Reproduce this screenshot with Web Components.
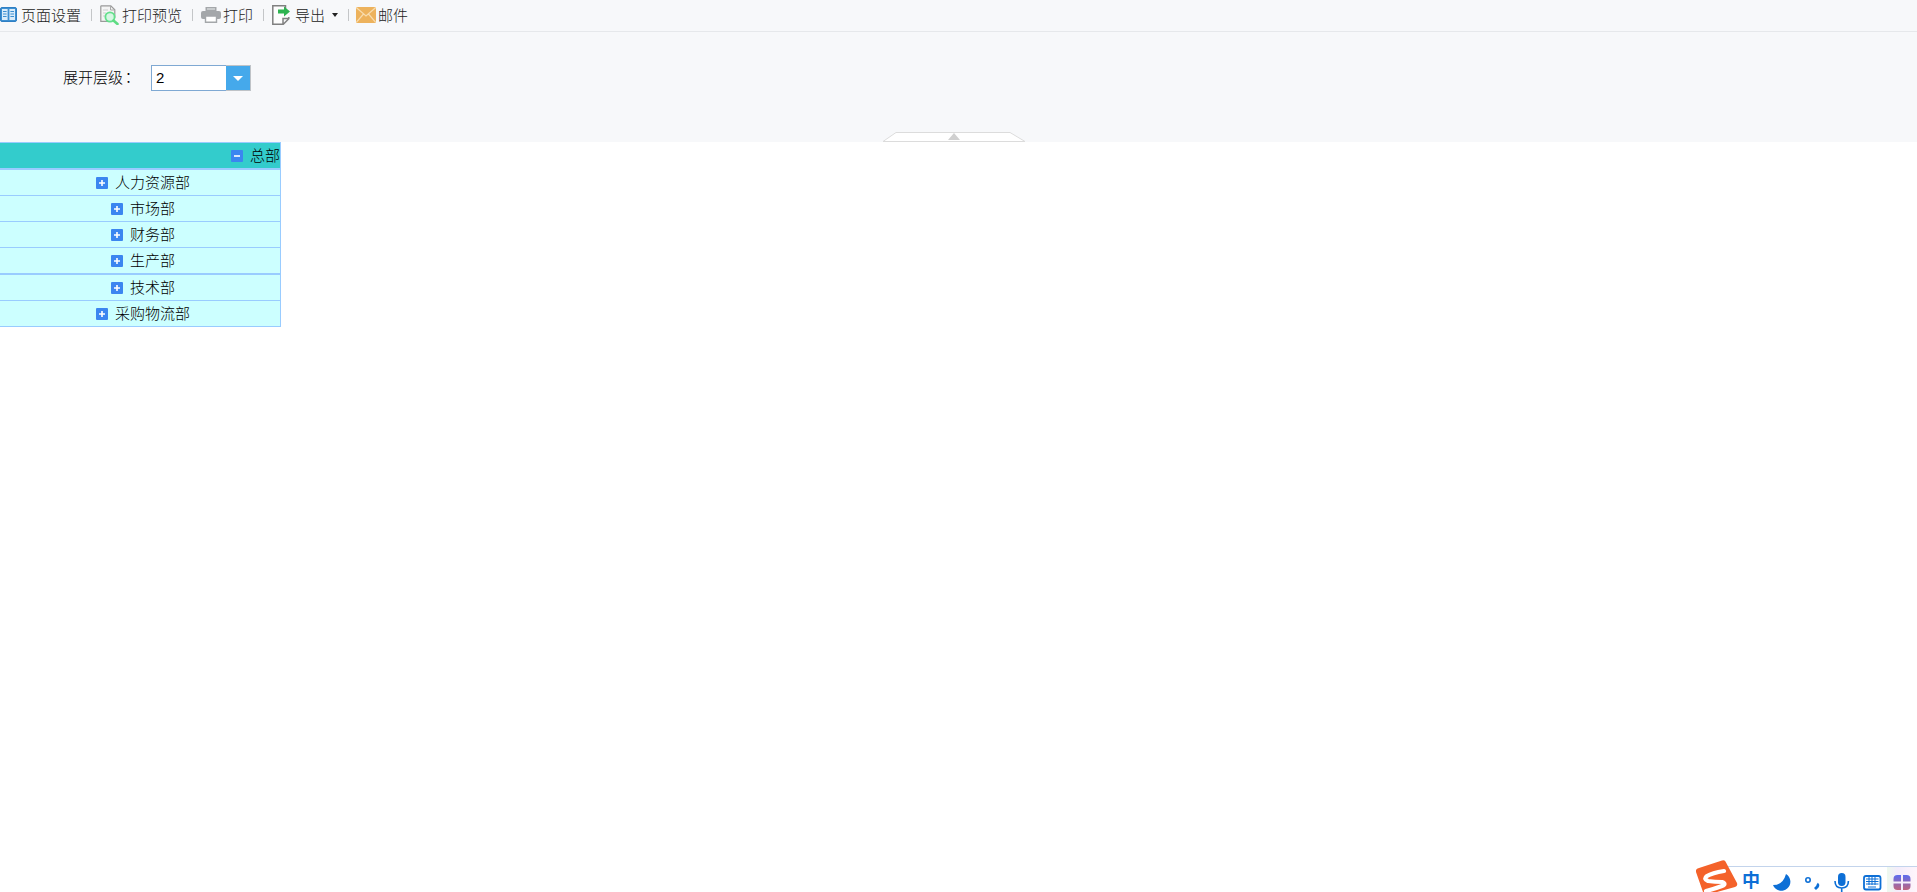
<!DOCTYPE html>
<html lang="zh"><head><meta charset="utf-8">
<style>
html,body{margin:0;height:100%;background:#fff;overflow:hidden}
body{font-family:"Noto Sans CJK SC","Liberation Sans",sans-serif;position:relative}
</style></head><body>
<report-toolbar>
  <tool-button label="页面设置" sep gap="4"><svg slot="icon" width="17" height="15" viewBox="0 0 17 15"><rect x=".5" y=".5" width="16" height="14" rx="1.5" fill="#3d8fd1" stroke="#2f7fc4"/><rect x="2" y="2" width="5.6" height="11" fill="#d9ecfa"/><rect x="9.4" y="2" width="5.6" height="11" fill="#d9ecfa"/><path d="M3 4.5h3.6M3 7h3.6M3 9.5h3.6M10.4 4.5H14M10.4 7H14M10.4 9.5H14" stroke="#3d8fd1"/></svg></tool-button>
  <tool-button label="打印预览" sep gap="2"><svg slot="icon" width="20" height="20" viewBox="0 0 20 20"><path d="M.8.8h10l4 4v8M.8.8v15.500h9" fill="#f4f4f4" stroke="#9a9a9a" stroke-width="1.2"/><path d="M10.500 1v4h4" fill="none" stroke="#aaa"/><path d="M3 5h5M3 8h3M3 11h2" stroke="#ccc"/><circle cx="10" cy="12" r="4.600" fill="#d6f7e4" stroke="#63e08c" stroke-width="1.800"/><path d="M13.500 15.500l4 3.500" stroke="#5fdc84" stroke-width="2.600" stroke-linecap="round"/></svg></tool-button>
  <tool-button label="打印" sep gap="2"><svg slot="icon" width="20" height="16" viewBox="0 0 20 16"><path d="M4.500 0h11v4h-11z" fill="#a4a7aa"/><rect y="4" width="20" height="8" rx="2" fill="#a4a7aa"/><path d="M4.500 9h11v6.300h-11z" fill="#fff" stroke="#a4a7aa" stroke-width="1.400"/><path d="M6 2h8" stroke="#d5d7d9" stroke-width="1.500"/></svg></tool-button>
  <tool-button label="导出" sep="7" gap="5" caret><svg slot="icon" width="18" height="20" viewBox="0 0 18 20"><path d="M13.500 7V.8H.8v18.400h10.500l5.500-5.500V12M11 19v-5.500h5.500" fill="#fdfdfd" stroke="#808080" stroke-width="1.500"/><path d="M6 4.500h6V1.500L18 6.500l-6 5V8.500H6z" fill="#2eb350"/></svg></tool-button>
  <tool-button label="邮件" gap="2"><svg slot="icon" width="20" height="16" viewBox="0 0 20 16"><rect width="20" height="16" rx="1.500" fill="#edb25c"/><path d="M.5.800L10 9 19.500.8M.5 15.200L7.500 7M19.500 15.200L12.500 7" fill="none" stroke="#f8dcae" stroke-width="1.200"/></svg></tool-button>
</report-toolbar>
<param-panel label="展开层级" value="2"></param-panel>
<tree-table>
  <tree-row head>总部</tree-row>
  <tree-row>人力资源部</tree-row>
  <tree-row>市场部</tree-row>
  <tree-row>财务部</tree-row>
  <tree-row thick>生产部</tree-row>
  <tree-row>技术部</tree-row>
  <tree-row>采购物流部</tree-row>
</tree-table>
<ime-bar></ime-bar>
<script>
function def(name, css, html){
  customElements.define(name, class extends HTMLElement{
    constructor(){super();this.attachShadow({mode:'open'})}
    connectedCallback(){this.shadowRoot.innerHTML='<style>'+css+'</style>'+(typeof html==='function'?html(this):html)}
  });
}
def('report-toolbar',
 ':host{display:flex;align-items:center;height:31px;background:#f7f8fa;border-bottom:1px solid #e6e8eb}',
 '<slot></slot>');
def('tool-button',
 ':host{display:flex;align-items:center;height:29px;padding-bottom:2px;font-size:15px;font-weight:300;color:#222;white-space:nowrap}'+
 '.i{display:flex;align-items:center}.l{line-height:29px}'+
 '.c{width:0;height:0;border:3.5px solid transparent;border-top:4px solid #222;border-bottom:0;margin-left:7px}'+
 '.s{width:1px;height:12px;background:#c4c6c8}',
 e=>{const sep=e.hasAttribute('sep');const caret=e.hasAttribute('caret');
  return '<span class="i"><slot name="icon"></slot></span><span class="l" style="margin-left:'+e.getAttribute('gap')+'px">'+e.getAttribute('label')+'</span>'+
  (caret?'<span class="c"></span>':'')+
  (sep?'<span class="s" style="margin:0 '+(e.getAttribute('sep')||8)+'px 0 10px"></span>':'');});
def('param-panel',
 ':host{display:block;position:relative;height:110px;background:#f7f8fa;font-size:15px;font-weight:300;color:#000}'+
 '.r{display:flex;align-items:center;padding:33px 0 0 63px}'+
 '.l{width:88px;line-height:24px;padding-bottom:2px;display:flex}'+
 '.l b{font:300 15px/24px "Noto Sans CJK TC",sans-serif;margin-left:-2px}'+
 '.b{display:flex;width:100px;height:26px;box-sizing:border-box}'+
 '.v{flex:1;border:1px solid #7fa9d3;background:#fff;border-right:0;font:15px/24px "Liberation Sans",sans-serif;padding-left:4px;color:#000}'+
 '.a{width:24px;background:#45a9eb;border:1px solid #bfc3c7;border-left:0;display:flex;align-items:center;justify-content:center}'+
 '.a i{width:0;height:0;border:5.500px solid transparent;border-top:5.500px solid #fff;border-bottom:0;margin-top:1px}'+
 '.h{position:absolute;left:882px;top:100px;width:144px;height:10px}',
 e=>'<div class="r"><span class="l">'+e.getAttribute('label')+'<b>：</b></span><div class="b"><span class="v">'+e.getAttribute('value')+'</span><span class="a"><i></i></span></div></div>'+
 '<svg class="h" viewBox="0 0 144 10"><path d="M1 9.500L14 .5H128L143 9.500z" fill="#fff" stroke="#dcdcdc" stroke-width="1"/><path d="M72 1l6 7h-12z" fill="#d0d0d0"/></svg>');
def('tree-table',
 ':host{display:block;width:281px;border-top:1px solid #99ccff;border-right:1px solid #99ccff;box-sizing:border-box}',
 '<slot></slot>');
def('tree-row',
 ':host{display:flex;align-items:center;justify-content:center;height:25px;padding-left:6px;box-sizing:content-box;background:#ccffff;border-bottom:1px solid #99ccff;font-size:15px;font-weight:300;color:#000}'+
 ':host([head]){background:#33cccc;justify-content:flex-end;border-bottom-width:2px;padding-left:0}'+
 ':host([thick]){border-bottom-width:2px}'+
 'svg{margin-right:7px;flex:none}span{line-height:23px;padding-bottom:2px}',
 e=>{const h=e.hasAttribute('head');
  return '<svg width="12" height="12" viewBox="0 0 12 12"><rect width="12" height="12" rx="1" fill="#3b86f0"/><path d="M3 6h6'+(h?'':'M6 3v6')+'" stroke="#fff" stroke-width="1.600"/></svg><span><slot></slot></span>';});
def('ime-bar',
 ':host{position:absolute;left:1696px;bottom:0;width:221px;height:32px;display:block}'+
 '.bar{position:absolute;left:30px;right:0;top:6px;bottom:0;background:#fff;border-top:1px solid #c3d4ec}'+
 'svg{position:absolute;left:0;top:0;overflow:hidden}'+
 '.z{position:absolute;left:46px;top:7px;font:bold 18px/24px "Noto Sans CJK SC",sans-serif;color:#0d6fd6}',
 '<div class="bar"></div>'+
 '<svg width="221" height="32" viewBox="1696 860 221 32">'+
 '<defs><linearGradient id="cl" x1="0" y1="0" x2="0" y2="1"><stop offset="0" stop-color="#5b6cf0"/><stop offset="1" stop-color="#c0647e"/></linearGradient>'+
 '<linearGradient id="bg" x1="0" y1="0" x2="1" y2="0"><stop offset="0" stop-color="#eef9ee"/><stop offset=".35" stop-color="#f3ecfb"/><stop offset="1" stop-color="#fff5fb"/></linearGradient></defs>'+
 '<path d="M1699 868L1722 860.500q3-1 4 2L1737 883q1 3-2 4L1717 892H1703L1696 872q-1-3 3-4z" fill="#f4622a"/>'+
 '<path d="M1724 871Q1712 873 1707 876Q1703 879 1708 881Q1715 882 1722 882Q1727 884 1722 886Q1714 889 1706 891" fill="none" stroke="#fff" stroke-width="4.200" stroke-linecap="round"/>'+
 '<path d="M1786 874A9 9 0 1 1 1773 885Q1783 885 1786 874z" fill="#0d6fd6"/>'+
 '<circle cx="1808" cy="880" r="2.200" fill="none" stroke="#0d6fd6" stroke-width="1.600"/><path d="M1817 884q1.500 1 .5 2.500l-2.500 2.500" fill="none" stroke="#0d6fd6" stroke-width="2.800"/>'+
 '<rect x="1838" y="873" width="7.500" height="13" rx="3.700" fill="#0d6fd6"/><path d="M1835 881q0 7 6.700 7t6.700-7M1841.700 888v4" fill="none" stroke="#0d6fd6" stroke-width="1.600"/>'+
 '<rect x="1864" y="876" width="16.500" height="13.500" rx="2" fill="#fff" stroke="#0d6fd6" stroke-width="1.800"/><path d="M1866 879h12.500M1866 881.500h12.500M1866 884h12.500M1869 877v8M1872 877v8M1875 877v8M1868 887h8" stroke="#0d6fd6" stroke-width="1"/>'+
 '<rect x="1887" y="867" width="30" height="25" fill="url(#bg)"/>'+
 '<path d="M1901 875v6.500h-7.500v-2.500q0-4 4-4zM1903 875h3.500q4 0 4 4v2.500H1903zM1901 883.500V890h-3.500q-4 0-4-4v-2.500zM1903 883.500h7.500V886q0 4-4 4H1903z" fill="url(#cl)"/>'+
 '</svg><span class="z">中</span>');
</script>
</body></html>
